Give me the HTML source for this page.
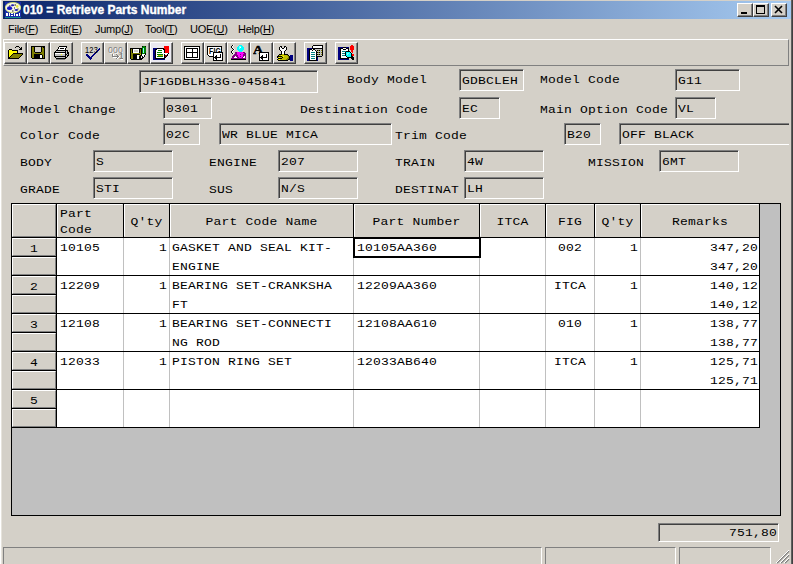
<!DOCTYPE html>
<html><head><meta charset="utf-8"><title>010 = Retrieve Parts Number</title>
<style>
html,body{margin:0;padding:0;}
body{width:793px;height:564px;overflow:hidden;background:#d4d0c8;position:relative;font-family:"Liberation Mono",monospace;font-size:13px;letter-spacing:0.2px;color:#000;}
.abs,.l,.f,.hc,.rh,.c,.tb,.sp,.menu,.cap{position:absolute;box-sizing:border-box;}
#title{left:3px;top:1px;width:788px;height:18px;background:linear-gradient(90deg,#0a246a 0%,#a6caf0 100%);}
#ttext{left:23px;top:3px;font-family:"Liberation Sans",sans-serif;font-weight:bold;font-size:12px;color:#fff;white-space:nowrap;line-height:15px;-webkit-text-stroke:0.35px #fff;letter-spacing:0;}
.cap{top:3px;width:16px;height:14px;background:#d4d0c8;border:1px solid;border-color:#fff #404040 #404040 #fff;box-shadow:inset -1px -1px 0 #808080;}
.menu{top:22px;font-family:"Liberation Sans",sans-serif;font-size:11px;letter-spacing:-0.25px;line-height:14px;white-space:nowrap;}
.tb{top:42px;width:23px;height:22px;background:#d4d0c8;border:1px solid;border-color:#fff #404040 #404040 #fff;box-shadow:inset -1px -1px 0 #808080;}
.l{white-space:nowrap;line-height:15px;height:15px;}
.f{background:#d4d0c8;border:1px solid;border-color:#808080 #fff #fff #808080;box-shadow:inset 1px 1px 0 #404040;white-space:nowrap;line-height:15px;padding:3px 0 0 2px;overflow:hidden;}
#grid{left:11px;top:203px;width:770px;height:313px;background:#c0c0c0;border:1px solid #000;}
.hc{top:204px;height:33px;background:#d4d0c8;border:1px solid;border-color:#fff #d4d0c8 #d4d0c8 #fff;white-space:nowrap;line-height:15px;text-align:center;}
.rh{left:12px;width:44px;height:18px;background:#d4d0c8;border:1px solid;border-color:#fff #808080 #808080 #fff;text-align:center;line-height:18px;padding-top:1px;}
.c{white-space:nowrap;line-height:19px;height:19px;}
.r{text-align:right;}
.t{display:inline-block;transform:scaleY(0.9);transform-origin:0 11px;}
.c .t{transform-origin:0 13px;}
.rh .t{transform-origin:0 12.5px;}
.sp{top:547px;height:19px;border:1px solid;border-color:#808080 #fff #fff #808080;}
</style></head><body>
<div id="title" class="abs"></div>
<svg class="abs" style="left:5px;top:2px" width="16" height="16" viewBox="0 0 16 16"><rect width="16" height="16" fill="#1a2caa"/><ellipse cx="8" cy="5.6" rx="7.8" ry="5.2" fill="#f6f6e4" stroke="#d8e860" stroke-width="0.8"/><ellipse cx="4.6" cy="6.2" rx="2.6" ry="1.9" fill="#1818c8"/><ellipse cx="7.6" cy="3.2" rx="1.6" ry="1" fill="#2020b0"/><ellipse cx="11.3" cy="8" rx="1.8" ry="1.1" fill="#2020b0"/><ellipse cx="12.2" cy="4.4" rx="1.3" ry="1.4" fill="#e8e840"/><path d="M9.5 2.5h1.5v1h-1.5zM9 5.5h1v1H9zM12.5 6.5h1v1h-1zM4 3.5h1.5v.8H4zM7 8.5h1.5v1H7z" fill="#101010"/><path d="M1 11h2v3H1zM4 11h1v3H4zM6 11h2v1H6zM6 13h2v1H6zM9 11h1v3H9zM11 12h2v2h-2zM14 11h1v3h-1z" fill="#fff"/><rect x="0" y="15" width="16" height="1" fill="#108888"/></svg>
<div id="ttext" class="abs">010 = Retrieve Parts Number</div>
<div class="cap" style="left:737px"><svg width="14" height="12" style="display:block" shape-rendering="crispEdges"><rect x="3" y="8" width="6" height="2" fill="#000"/></svg></div>
<div class="cap" style="left:753px"><svg width="14" height="12" style="display:block" shape-rendering="crispEdges"><path d="M2.5 1.5h8v8h-8z" fill="none" stroke="#000"/><path d="M2 2h9" stroke="#000" stroke-width="2"/></svg></div>
<div class="cap" style="left:771px"><svg width="14" height="12" style="display:block"><path d="M3 2l7 7M10 2l-7 7" stroke="#000" stroke-width="1.6"/></svg></div>
<div class="menu" style="left:8px">File(<u>F</u>)</div>
<div class="menu" style="left:50px">Edit(<u>E</u>)</div>
<div class="menu" style="left:95px">Jump(<u>J</u>)</div>
<div class="menu" style="left:145px">Tool(<u>T</u>)</div>
<div class="menu" style="left:190px">UOE(<u>U</u>)</div>
<div class="menu" style="left:238px">Help(<u>H</u>)</div>
<div class="abs" style="left:3px;top:39px;width:786px;height:27px;border:1px solid;border-color:#fff #808080 #808080 #fff"></div>
<div class="abs" style="left:0;top:0;width:1px;height:564px;background:#fff"></div>
<div class="abs" style="left:1px;top:0;width:1px;height:564px;background:#e6e3dc"></div>
<div class="abs" style="left:791px;top:0;width:1px;height:564px;background:#606060"></div>
<div class="abs" style="left:792px;top:0;width:1px;height:564px;background:#404040"></div>
<div class="tb" style="left:4px"></div>
<div class="tb" style="left:27px"></div>
<div class="tb" style="left:50px"></div>
<div class="tb" style="left:81px"></div>
<div class="tb" style="left:104px"></div>
<div class="tb" style="left:127px"></div>
<div class="tb" style="left:150px;background:#ebe9f0"></div>
<div class="tb" style="left:181px"></div>
<div class="tb" style="left:204px"></div>
<div class="tb" style="left:227px"></div>
<div class="tb" style="left:250px"></div>
<div class="tb" style="left:273px"></div>
<div class="tb" style="left:304px"></div>
<div class="tb" style="left:335px"></div>
<svg class="abs" style="left:8px;top:45px" width="16" height="14" shape-rendering="crispEdges"><path fill="#000" d="M8 1h3v1h-3zM7 2h1v1h-1zM11 2h1v1h-1zM13 2h1v1h-1zM12 3h2v1h-2zM1 4h3v1h-3zM11 4h3v1h-3zM0 5h1v1h-1zM4 5h6v1h-6zM0 6h1v1h-1zM9 6h1v1h-1zM0 7h1v1h-1zM9 7h1v1h-1zM0 8h1v1h-1zM5 8h10v1h-10zM0 9h1v1h-1zM4 9h1v1h-1zM14 9h1v1h-1zM0 10h1v1h-1zM3 10h1v1h-1zM13 10h1v1h-1zM0 11h1v1h-1zM2 11h1v1h-1zM12 11h1v1h-1zM0 12h2v1h-2zM11 12h1v1h-1zM0 13h11v1h-11z"/><path fill="#ffff00" d="M1 5h3v1h-3zM1 6h8v1h-8zM1 7h8v1h-8zM1 8h4v1h-4zM1 9h3v1h-3zM1 10h2v1h-2zM1 11h1v1h-1z"/><path fill="#808000" d="M5 9h9v1h-9zM4 10h9v1h-9zM3 11h9v1h-9zM2 12h9v1h-9z"/></svg>
<svg class="abs" style="left:31px;top:46px" width="15" height="13" shape-rendering="crispEdges"><path fill="#000" d="M0 0h14v1h-14zM0 1h1v1h-1zM3 1h1v1h-1zM10 1h1v1h-1zM12 1h2v1h-2zM0 2h1v1h-1zM3 2h1v1h-1zM10 2h1v1h-1zM13 2h1v1h-1zM0 3h1v1h-1zM3 3h1v1h-1zM10 3h1v1h-1zM13 3h1v1h-1zM0 4h1v1h-1zM3 4h1v1h-1zM10 4h1v1h-1zM13 4h1v1h-1zM0 5h1v1h-1zM3 5h1v1h-1zM10 5h1v1h-1zM13 5h1v1h-1zM0 6h1v1h-1zM4 6h6v1h-6zM13 6h1v1h-1zM0 7h1v1h-1zM13 7h1v1h-1zM0 8h1v1h-1zM3 8h8v1h-8zM13 8h1v1h-1zM0 9h1v1h-1zM3 9h6v1h-6zM11 9h1v1h-1zM13 9h1v1h-1zM0 10h1v1h-1zM3 10h6v1h-6zM11 10h1v1h-1zM13 10h1v1h-1zM0 11h1v1h-1zM3 11h6v1h-6zM11 11h1v1h-1zM13 11h1v1h-1zM1 12h13v1h-13z"/><path fill="#808000" d="M1 1h2v1h-2zM11 1h1v1h-1zM1 2h2v1h-2zM11 2h2v1h-2zM1 3h2v1h-2zM11 3h2v1h-2zM1 4h2v1h-2zM11 4h2v1h-2zM1 5h2v1h-2zM11 5h2v1h-2zM1 6h3v1h-3zM10 6h3v1h-3zM1 7h12v1h-12zM1 8h2v1h-2zM11 8h2v1h-2zM1 9h2v1h-2zM12 9h1v1h-1zM1 10h2v1h-2zM12 10h1v1h-1zM1 11h2v1h-2zM12 11h1v1h-1z"/><path fill="#d4d0c8" d="M4 1h6v1h-6zM4 2h6v1h-6zM4 3h6v1h-6zM4 4h6v1h-6zM4 5h6v1h-6z"/><path fill="#fff" d="M9 9h2v1h-2zM9 10h2v1h-2zM9 11h2v1h-2z"/></svg>
<svg class="abs" style="left:54px;top:46px" width="15" height="14" shape-rendering="crispEdges"><path fill="#000" d="M5 0h8v1h-8zM4 1h1v1h-1zM12 1h1v1h-1zM4 2h1v1h-1zM6 2h4v1h-4zM11 2h1v1h-1zM3 3h1v1h-1zM11 3h1v1h-1zM2 4h12v1h-12zM1 5h1v1h-1zM11 5h1v1h-1zM13 5h1v1h-1zM0 6h12v1h-12zM13 6h2v1h-2zM0 7h1v1h-1zM11 7h1v1h-1zM13 7h2v1h-2zM0 8h1v1h-1zM11 8h2v1h-2zM14 8h1v1h-1zM0 9h1v1h-1zM11 9h1v1h-1zM13 9h2v1h-2zM0 10h12v1h-12zM13 10h1v1h-1zM1 11h1v1h-1zM11 11h2v1h-2zM2 12h10v1h-10z"/><path fill="#fff" d="M5 1h7v1h-7zM5 2h1v1h-1zM10 2h1v1h-1zM4 3h7v1h-7zM1 7h10v1h-10z"/><path fill="#c0c0c0" d="M2 5h9v1h-9zM12 5h1v1h-1zM12 6h1v1h-1zM12 7h1v1h-1zM1 8h6v1h-6zM8 8h3v1h-3zM13 8h1v1h-1zM1 9h10v1h-10zM12 9h1v1h-1zM12 10h1v1h-1zM2 11h9v1h-9z"/><path fill="#ffff00" d="M7 8h1v1h-1z"/><path fill="#808080" d="M2 13h9v1h-9z"/></svg>
<svg class="abs" style="left:84px;top:45px" width="16" height="15" shape-rendering="crispEdges"><path fill="#000080" d="M15 3h1v1h-1zM14 4h2v1h-2zM13 5h2v1h-2zM12 6h2v1h-2zM11 7h2v1h-2zM10 8h2v1h-2zM2 9h2v1h-2zM9 9h2v1h-2zM2 10h3v1h-3zM8 10h2v1h-2zM3 11h3v1h-3zM7 11h2v1h-2zM4 12h4v1h-4zM5 13h3v1h-3zM6 14h1v1h-1z"/><text x="1" y="7.5" font-family="Liberation Sans,sans-serif" font-size="8.5" textLength="13" lengthAdjust="spacingAndGlyphs" fill="#000" shape-rendering="auto">123</text></svg>
<svg class="abs" style="left:107px;top:45px" width="16" height="15" shape-rendering="crispEdges"><path fill="#808080" d="M5 8h1v1h-1zM5 9h1v1h-1zM9 9h1v1h-1zM5 10h1v1h-1zM10 10h1v1h-1zM5 11h7v1h-7zM10 12h1v1h-1zM9 13h1v1h-1z"/><path fill="#fff" d="M6 9h1v1h-1zM6 10h1v1h-1zM12 11h1v1h-1zM6 12h4v1h-4zM11 12h1v1h-1zM10 13h1v1h-1z"/><text x="2" y="8.5" font-family="Liberation Sans,sans-serif" font-size="8.5" textLength="15" lengthAdjust="spacingAndGlyphs" fill="#fff" shape-rendering="auto">000</text><text x="1" y="7.5" font-family="Liberation Sans,sans-serif" font-size="8.5" textLength="15" lengthAdjust="spacingAndGlyphs" fill="#808080" shape-rendering="auto">000</text><text x="13" y="15" font-family="Liberation Sans,sans-serif" font-size="8.5" font-weight="bold" fill="#fff" shape-rendering="auto">1</text><text x="12" y="14" font-family="Liberation Sans,sans-serif" font-size="8.5" font-weight="bold" fill="#808080" shape-rendering="auto">1</text></svg>
<svg class="abs" style="left:130px;top:45px" width="16" height="15" shape-rendering="crispEdges"><path fill="#000" d="M12 1h1v1h-1zM15 1h1v1h-1zM0 3h12v1h-12zM0 4h1v1h-1zM2 4h1v1h-1zM9 4h1v1h-1zM11 4h1v1h-1zM0 5h1v1h-1zM2 5h1v1h-1zM9 5h1v1h-1zM11 5h1v1h-1zM0 6h1v1h-1zM2 6h1v1h-1zM9 6h1v1h-1zM11 6h1v1h-1zM0 7h1v1h-1zM2 7h1v1h-1zM9 7h1v1h-1zM11 7h1v1h-1zM0 8h1v1h-1zM11 8h1v1h-1zM15 8h1v1h-1zM0 9h1v1h-1zM3 9h7v1h-7zM11 9h1v1h-1zM15 9h1v1h-1zM0 10h1v1h-1zM3 10h4v1h-4zM10 10h2v1h-2zM14 10h1v1h-1zM0 11h1v1h-1zM3 11h4v1h-4zM9 11h2v1h-2zM12 11h1v1h-1zM14 11h1v1h-1zM0 12h1v1h-1zM3 12h4v1h-4zM9 12h2v1h-2zM12 12h2v1h-2zM0 13h1v1h-1zM3 13h4v1h-4zM9 13h4v1h-4zM1 14h11v1h-11z"/><path fill="#008000" d="M13 1h2v1h-2zM12 2h4v1h-4zM12 3h1v1h-1zM14 3h2v1h-2zM12 4h1v1h-1zM14 4h2v1h-2zM12 5h1v1h-1zM14 5h2v1h-2zM12 6h1v1h-1zM14 6h2v1h-2zM12 7h1v1h-1zM14 7h2v1h-2zM12 8h3v1h-3z"/><path fill="#80ffff" d="M13 3h1v1h-1zM13 4h1v1h-1zM13 5h1v1h-1zM13 6h1v1h-1zM13 7h1v1h-1z"/><path fill="#808000" d="M1 4h1v1h-1zM10 4h1v1h-1zM1 5h1v1h-1zM10 5h1v1h-1zM1 6h1v1h-1zM10 6h1v1h-1zM1 7h1v1h-1zM10 7h1v1h-1zM1 8h10v1h-10zM1 9h2v1h-2zM1 10h2v1h-2zM1 11h2v1h-2zM1 12h2v1h-2zM1 13h2v1h-2z"/><path fill="#fff" d="M3 4h6v1h-6zM3 5h1v1h-1zM8 5h1v1h-1zM3 6h1v1h-1zM8 6h1v1h-1zM3 7h6v1h-6zM12 9h3v1h-3zM7 10h2v1h-2zM12 10h2v1h-2zM7 11h2v1h-2zM13 11h1v1h-1zM7 12h2v1h-2zM11 12h1v1h-1zM7 13h2v1h-2z"/><path fill="#d4d0c8" d="M4 5h4v1h-4zM4 6h4v1h-4z"/><path fill="#c0c000" d="M10 9h1v1h-1zM9 10h1v1h-1z"/></svg>
<svg class="abs" style="left:153px;top:45px" width="16" height="15" shape-rendering="crispEdges"><path fill="#ff0000" d="M11 1h5v1h-5zM11 2h5v1h-5zM11 3h5v1h-5zM12 4h4v1h-4zM12 5h4v1h-4zM12 6h4v1h-4zM12 7h4v1h-4z"/><path fill="#000080" d="M0 3h4v1h-4zM0 4h2v1h-2zM0 5h2v1h-2zM0 6h2v1h-2zM0 7h2v1h-2zM0 8h2v1h-2zM0 9h2v1h-2zM0 10h2v1h-2zM0 11h2v1h-2zM0 12h2v1h-2zM0 13h2v1h-2zM0 14h12v1h-12z"/><path fill="#000" d="M4 3h7v1h-7zM2 4h2v1h-2zM10 4h2v1h-2zM2 5h1v1h-1zM11 5h1v1h-1zM2 6h1v1h-1zM11 6h1v1h-1zM2 7h1v1h-1zM11 7h1v1h-1zM2 8h1v1h-1zM15 8h1v1h-1zM2 9h1v1h-1zM11 9h1v1h-1zM14 9h1v1h-1zM2 10h1v1h-1zM11 10h1v1h-1zM14 10h1v1h-1zM2 11h1v1h-1zM11 11h1v1h-1zM13 11h1v1h-1zM2 12h1v1h-1zM11 12h2v1h-2zM2 13h10v1h-10z"/><path fill="#fff" d="M4 4h6v1h-6zM3 5h2v1h-2zM9 5h2v1h-2zM3 6h8v1h-8zM3 7h1v1h-1zM9 7h2v1h-2zM3 8h12v1h-12zM3 9h1v1h-1zM10 9h1v1h-1zM12 9h2v1h-2zM3 10h2v1h-2zM10 10h1v1h-1zM3 11h1v1h-1zM10 11h1v1h-1zM3 12h8v1h-8z"/><path fill="#008000" d="M5 5h4v1h-4zM4 7h5v1h-5zM4 9h6v1h-6zM4 11h6v1h-6z"/><path fill="#c0c000" d="M5 10h5v1h-5z"/><path fill="#800000" d="M12 10h2v1h-2zM12 11h1v1h-1z"/></svg>
<svg class="abs" style="left:184px;top:46px" width="16" height="14" shape-rendering="crispEdges"><path fill="#000" d="M0 0h16v1h-16zM0 1h1v1h-1zM15 1h1v1h-1zM0 2h1v1h-1zM2 2h12v1h-12zM15 2h1v1h-1zM0 3h1v1h-1zM2 3h1v1h-1zM8 3h1v1h-1zM13 3h1v1h-1zM15 3h1v1h-1zM0 4h1v1h-1zM2 4h1v1h-1zM8 4h1v1h-1zM13 4h1v1h-1zM15 4h1v1h-1zM0 5h1v1h-1zM2 5h1v1h-1zM8 5h1v1h-1zM13 5h1v1h-1zM15 5h1v1h-1zM0 6h1v1h-1zM2 6h12v1h-12zM15 6h1v1h-1zM0 7h1v1h-1zM2 7h1v1h-1zM8 7h1v1h-1zM13 7h1v1h-1zM15 7h1v1h-1zM0 8h1v1h-1zM2 8h1v1h-1zM8 8h1v1h-1zM13 8h1v1h-1zM15 8h1v1h-1zM0 9h1v1h-1zM2 9h1v1h-1zM8 9h1v1h-1zM13 9h1v1h-1zM15 9h1v1h-1zM0 10h1v1h-1zM2 10h1v1h-1zM8 10h1v1h-1zM13 10h1v1h-1zM15 10h1v1h-1zM0 11h1v1h-1zM2 11h12v1h-12zM15 11h1v1h-1zM0 12h1v1h-1zM15 12h1v1h-1zM0 13h16v1h-16z"/><path fill="#fff" d="M1 1h14v1h-14zM1 2h1v1h-1zM14 2h1v1h-1zM1 3h1v1h-1zM3 3h5v1h-5zM9 3h4v1h-4zM14 3h1v1h-1zM1 4h1v1h-1zM3 4h5v1h-5zM9 4h4v1h-4zM14 4h1v1h-1zM1 5h1v1h-1zM3 5h5v1h-5zM9 5h4v1h-4zM14 5h1v1h-1zM1 6h1v1h-1zM14 6h1v1h-1zM1 7h1v1h-1zM3 7h5v1h-5zM9 7h4v1h-4zM14 7h1v1h-1zM1 8h1v1h-1zM3 8h5v1h-5zM9 8h4v1h-4zM14 8h1v1h-1zM1 9h1v1h-1zM3 9h5v1h-5zM9 9h4v1h-4zM14 9h1v1h-1zM1 10h1v1h-1zM3 10h5v1h-5zM9 10h4v1h-4zM14 10h1v1h-1zM1 11h1v1h-1zM14 11h1v1h-1zM1 12h14v1h-14z"/></svg>
<svg class="abs" style="left:207px;top:46px" width="16" height="11" shape-rendering="crispEdges"><path fill="#000" d="M0 0h15v1h-15zM0 1h1v1h-1zM14 1h1v1h-1zM0 2h1v1h-1zM14 2h1v1h-1zM0 3h1v1h-1zM14 3h1v1h-1zM0 4h1v1h-1zM14 4h1v1h-1zM0 5h1v1h-1zM14 5h1v1h-1zM0 6h1v1h-1zM14 6h1v1h-1zM0 7h1v1h-1zM14 7h1v1h-1zM0 8h1v1h-1zM14 8h1v1h-1zM1 9h1v1h-1zM14 9h1v1h-1zM2 10h13v1h-13z"/><path fill="#fff" d="M1 1h13v1h-13zM1 2h13v1h-13zM1 3h13v1h-13zM1 4h13v1h-13zM1 5h13v1h-13zM1 6h13v1h-13zM1 7h13v1h-13zM1 8h13v1h-13zM2 9h12v1h-12z"/><text x="2" y="8" font-family="Liberation Sans,sans-serif" font-size="8.5" font-weight="bold" textLength="12" lengthAdjust="spacingAndGlyphs" fill="#000" shape-rendering="auto">FIG</text></svg>
<svg class="abs" style="left:213px;top:52px" width="10" height="9" shape-rendering="crispEdges"><path fill="#000" d="M0 0h10v1h-10zM0 1h1v1h-1zM9 1h1v1h-1zM0 2h1v1h-1zM7 2h1v1h-1zM9 2h1v1h-1zM0 3h1v1h-1zM3 3h1v1h-1zM7 3h1v1h-1zM9 3h1v1h-1zM0 4h1v1h-1zM2 4h2v1h-2zM7 4h1v1h-1zM9 4h1v1h-1zM0 5h8v1h-8zM9 5h1v1h-1zM0 6h1v1h-1zM2 6h2v1h-2zM9 6h1v1h-1zM0 7h1v1h-1zM3 7h1v1h-1zM9 7h1v1h-1zM0 8h10v1h-10z"/><path fill="#fff" d="M1 1h8v1h-8zM1 2h6v1h-6zM8 2h1v1h-1zM1 3h2v1h-2zM4 3h3v1h-3zM8 3h1v1h-1zM1 4h1v1h-1zM4 4h3v1h-3zM8 4h1v1h-1zM8 5h1v1h-1zM1 6h1v1h-1zM4 6h5v1h-5zM1 7h2v1h-2zM4 7h5v1h-5z"/></svg>
<svg class="abs" style="left:230px;top:45px" width="16" height="15" shape-rendering="crispEdges"><path fill="#000" d="M2 0h1v1h-1zM1 1h1v1h-1zM1 2h1v1h-1zM2 3h1v1h-1zM3 4h1v1h-1zM2 5h1v1h-1zM1 6h1v1h-1zM1 7h1v1h-1zM2 8h1v1h-1zM1 14h15v1h-15z"/><path fill="#fff" d="M3 0h1v1h-1zM2 1h1v1h-1zM2 2h1v1h-1zM10 2h1v1h-1zM3 3h1v1h-1zM4 4h1v1h-1zM3 5h1v1h-1zM2 6h1v1h-1zM2 7h1v1h-1zM3 8h1v1h-1zM5 11h1v1h-1zM14 11h1v1h-1zM4 12h3v1h-3zM13 12h2v1h-2z"/><path fill="#00ffff" d="M9 0h3v1h-3zM8 1h1v1h-1zM11 1h2v1h-2zM7 2h2v1h-2zM11 2h3v1h-3zM7 3h2v1h-2zM10 3h4v1h-4zM7 4h7v1h-7zM8 5h5v1h-5zM9 6h3v1h-3z"/><path fill="#80ffff" d="M9 1h2v1h-2zM9 2h1v1h-1zM9 3h1v1h-1z"/><path fill="#800080" d="M5 7h2v1h-2zM13 7h2v1h-2zM5 8h2v1h-2zM14 8h2v1h-2zM4 9h3v1h-3zM10 9h1v1h-1zM13 9h3v1h-3zM3 10h5v1h-5zM13 10h3v1h-3zM2 11h3v1h-3zM6 11h2v1h-2zM10 11h1v1h-1zM13 11h1v1h-1zM15 11h1v1h-1zM2 12h2v1h-2zM7 12h2v1h-2zM12 12h1v1h-1zM15 12h1v1h-1zM1 13h15v1h-15z"/><path fill="#ff00ff" d="M7 7h6v1h-6zM7 8h7v1h-7zM7 9h3v1h-3zM11 9h2v1h-2zM8 10h5v1h-5zM8 11h2v1h-2zM11 11h2v1h-2zM9 12h3v1h-3z"/></svg>
<svg class="abs" style="left:253px;top:45px" width="16" height="11" shape-rendering="crispEdges"><text x="0" y="9" font-family="Liberation Serif,serif" font-size="12.5" font-weight="bold" textLength="10.5" lengthAdjust="spacingAndGlyphs" stroke="#000" stroke-width="0.5" fill="#000" shape-rendering="auto">A</text></svg>
<svg class="abs" style="left:259px;top:52px" width="10" height="9" shape-rendering="crispEdges"><path fill="#000" d="M0 0h10v1h-10zM0 1h1v1h-1zM9 1h1v1h-1zM0 2h1v1h-1zM7 2h1v1h-1zM9 2h1v1h-1zM0 3h1v1h-1zM3 3h1v1h-1zM7 3h1v1h-1zM9 3h1v1h-1zM0 4h1v1h-1zM2 4h2v1h-2zM7 4h1v1h-1zM9 4h1v1h-1zM0 5h8v1h-8zM9 5h1v1h-1zM0 6h1v1h-1zM2 6h2v1h-2zM9 6h1v1h-1zM0 7h1v1h-1zM3 7h1v1h-1zM9 7h1v1h-1zM0 8h10v1h-10z"/><path fill="#fff" d="M1 1h8v1h-8zM1 2h6v1h-6zM8 2h1v1h-1zM1 3h2v1h-2zM4 3h3v1h-3zM8 3h1v1h-1zM1 4h1v1h-1zM4 4h3v1h-3zM8 4h1v1h-1zM8 5h1v1h-1zM1 6h1v1h-1zM4 6h5v1h-5zM1 7h2v1h-2zM4 7h5v1h-5z"/></svg>
<svg class="abs" style="left:277px;top:45px" width="16" height="16" shape-rendering="crispEdges"><path fill="#000" d="M3 1h2v1h-2zM7 1h2v1h-2zM2 2h1v1h-1zM4 2h1v1h-1zM7 2h1v1h-1zM9 2h1v1h-1zM2 3h1v1h-1zM5 3h2v1h-2zM9 3h1v1h-1zM2 4h1v1h-1zM9 4h1v1h-1zM3 5h1v1h-1zM8 5h1v1h-1zM4 6h1v1h-1zM7 6h1v1h-1zM4 7h1v1h-1zM7 7h1v1h-1zM4 8h1v1h-1zM7 8h1v1h-1zM2 9h3v1h-3zM7 9h4v1h-4zM1 10h1v1h-1zM11 10h1v1h-1zM0 11h5v1h-5zM12 11h1v1h-1zM0 12h1v1h-1zM5 12h1v1h-1zM12 12h1v1h-1zM1 13h4v1h-4zM12 13h1v1h-1zM0 14h1v1h-1zM11 14h2v1h-2zM1 15h10v1h-10z"/><path fill="#fff" d="M3 2h1v1h-1zM8 2h1v1h-1zM3 3h2v1h-2zM7 3h2v1h-2zM3 4h6v1h-6zM4 5h4v1h-4zM5 6h2v1h-2zM5 7h2v1h-2zM5 8h2v1h-2z"/><path fill="#c0c000" d="M5 9h2v1h-2zM2 10h2v1h-2zM5 10h5v1h-5zM5 11h1v1h-1zM7 11h4v1h-4zM1 12h1v1h-1zM3 12h2v1h-2zM6 12h5v1h-5zM5 13h5v1h-5zM1 14h1v1h-1zM3 14h6v1h-6z"/><path fill="#ffff00" d="M4 10h1v1h-1zM6 11h1v1h-1zM2 12h1v1h-1zM2 14h1v1h-1z"/><path fill="#808000" d="M10 10h1v1h-1zM11 11h1v1h-1zM11 12h1v1h-1zM10 13h2v1h-2zM9 14h2v1h-2z"/><path fill="#000080" d="M13 10h3v1h-3zM13 11h3v1h-3zM13 12h3v1h-3zM13 13h3v1h-3zM13 14h3v1h-3zM13 15h3v1h-3z"/></svg>
<svg class="abs" style="left:307px;top:45px" width="16" height="16" shape-rendering="crispEdges"><path fill="#000" d="M6 0h10v1h-10zM5 1h1v1h-1zM15 1h1v1h-1zM5 2h1v1h-1zM15 2h1v1h-1zM5 3h11v1h-11zM2 4h3v1h-3zM6 4h2v1h-2zM15 4h1v1h-1zM2 5h1v1h-1zM5 5h1v1h-1zM8 5h1v1h-1zM10 5h1v1h-1zM12 5h1v1h-1zM15 5h1v1h-1zM2 6h1v1h-1zM9 6h1v1h-1zM15 6h1v1h-1zM2 7h1v1h-1zM9 7h2v1h-2zM12 7h1v1h-1zM15 7h1v1h-1zM2 8h1v1h-1zM9 8h1v1h-1zM15 8h1v1h-1zM2 9h1v1h-1zM9 9h2v1h-2zM12 9h1v1h-1zM15 9h1v1h-1zM2 10h1v1h-1zM9 10h1v1h-1zM15 10h1v1h-1zM2 11h1v1h-1zM9 11h6v1h-6zM2 12h1v1h-1zM9 12h1v1h-1zM2 13h1v1h-1zM9 13h1v1h-1zM2 14h1v1h-1zM9 14h1v1h-1zM2 15h8v1h-8z"/><path fill="#fff" d="M6 1h9v1h-9zM6 2h9v1h-9zM5 4h1v1h-1zM3 5h2v1h-2zM6 5h2v1h-2zM3 6h6v1h-6zM3 7h1v1h-1zM8 7h1v1h-1zM3 8h6v1h-6zM3 9h1v1h-1zM8 9h1v1h-1zM3 10h6v1h-6zM3 11h1v1h-1zM8 11h1v1h-1zM3 12h6v1h-6zM3 13h1v1h-1zM8 13h1v1h-1zM3 14h6v1h-6z"/><path fill="#000080" d="M0 3h5v1h-5zM0 4h2v1h-2zM0 5h2v1h-2zM0 6h2v1h-2zM0 7h2v1h-2zM0 8h2v1h-2zM0 9h2v1h-2zM0 10h2v1h-2zM0 11h2v1h-2zM0 12h2v1h-2zM10 12h1v1h-1zM0 13h2v1h-2zM10 13h1v1h-1zM0 14h2v1h-2zM10 14h1v1h-1zM0 15h2v1h-2zM10 15h1v1h-1z"/><path fill="#c0c0c0" d="M8 4h7v1h-7zM9 5h1v1h-1zM13 5h1v1h-1zM10 6h5v1h-5zM13 7h1v1h-1zM10 8h5v1h-5zM13 9h1v1h-1zM10 10h5v1h-5z"/><path fill="#808000" d="M11 5h1v1h-1zM14 5h1v1h-1zM11 7h1v1h-1zM14 7h1v1h-1zM11 9h1v1h-1zM14 9h1v1h-1z"/><path fill="#008080" d="M4 7h4v1h-4zM4 9h4v1h-4zM4 11h4v1h-4zM4 13h4v1h-4z"/></svg>
<svg class="abs" style="left:338px;top:45px" width="16" height="15" shape-rendering="crispEdges"><path fill="#ff0000" d="M13 0h2v1h-2zM12 1h4v1h-4zM12 2h4v1h-4zM12 3h4v1h-4zM12 4h4v1h-4zM13 5h2v1h-2zM13 6h2v1h-2zM14 7h1v1h-1zM14 9h2v1h-2zM14 10h2v1h-2z"/><path fill="#000080" d="M0 2h5v1h-5zM8 2h3v1h-3zM0 3h2v1h-2zM0 4h2v1h-2zM0 5h2v1h-2zM0 6h2v1h-2zM0 7h2v1h-2zM0 8h2v1h-2zM0 9h2v1h-2zM0 10h2v1h-2zM0 11h2v1h-2zM0 12h2v1h-2zM0 13h2v1h-2zM0 14h11v1h-11z"/><path fill="#000" d="M5 2h3v1h-3zM2 3h3v1h-3zM8 3h3v1h-3zM2 4h1v1h-1zM5 4h3v1h-3zM10 4h1v1h-1zM2 5h1v1h-1zM10 5h1v1h-1zM2 6h1v1h-1zM8 6h4v1h-4zM2 7h1v1h-1zM7 7h1v1h-1zM12 7h1v1h-1zM2 8h1v1h-1zM7 8h1v1h-1zM13 8h1v1h-1zM2 9h1v1h-1zM7 9h1v1h-1zM13 9h1v1h-1zM2 10h1v1h-1zM7 10h1v1h-1zM13 10h1v1h-1zM2 11h1v1h-1zM8 11h1v1h-1zM13 11h2v1h-2zM2 12h1v1h-1zM9 12h7v1h-7zM2 13h9v1h-9zM13 13h3v1h-3zM14 14h2v1h-2z"/><path fill="#fff" d="M5 3h3v1h-3zM3 4h2v1h-2zM8 4h2v1h-2zM3 5h7v1h-7zM3 6h1v1h-1zM3 7h4v1h-4zM3 8h1v1h-1zM3 9h4v1h-4zM3 10h1v1h-1zM3 11h5v1h-5zM3 12h6v1h-6z"/><path fill="#008080" d="M4 6h4v1h-4zM4 8h3v1h-3zM4 10h3v1h-3z"/><path fill="#00ffff" d="M8 7h4v1h-4zM8 8h1v1h-1zM11 8h2v1h-2zM8 9h1v1h-1zM10 9h3v1h-3zM8 10h5v1h-5zM9 11h4v1h-4z"/><path fill="#80ffff" d="M9 8h2v1h-2zM9 9h1v1h-1z"/></svg>
<div class="l" style="left:20px;top:72px"><span class="t">Vin-Code</span></div>
<div class="f" style="left:139px;top:70px;width:179px;height:23px"><span class="t">JF1GDBLH33G-045841</span></div>
<div class="l" style="left:347px;top:72px"><span class="t">Body Model</span></div>
<div class="f" style="left:459px;top:69px;width:65px;height:22px"><span class="t">GDBCLEH</span></div>
<div class="l" style="left:540px;top:72px"><span class="t">Model Code</span></div>
<div class="f" style="left:675px;top:69px;width:65px;height:22px"><span class="t">G11</span></div>
<div class="l" style="left:20px;top:102px"><span class="t">Model Change</span></div>
<div class="f" style="left:163px;top:97px;width:49px;height:22px"><span class="t">0301</span></div>
<div class="l" style="left:300px;top:102px"><span class="t">Destination Code</span></div>
<div class="f" style="left:459px;top:97px;width:41px;height:22px"><span class="t">EC</span></div>
<div class="l" style="left:540px;top:102px"><span class="t">Main Option Code</span></div>
<div class="f" style="left:675px;top:97px;width:41px;height:22px"><span class="t">VL</span></div>
<div class="l" style="left:20px;top:128px"><span class="t">Color Code</span></div>
<div class="f" style="left:163px;top:123px;width:37px;height:22px"><span class="t">02C</span></div>
<div class="f" style="left:219px;top:123px;width:173px;height:22px"><span class="t">WR BLUE MICA</span></div>
<div class="l" style="left:395px;top:128px"><span class="t">Trim Code</span></div>
<div class="f" style="left:564px;top:123px;width:37px;height:22px"><span class="t">B20</span></div>
<div class="f" style="left:619px;top:123px;width:170px;height:22px;border-right:none"><span class="t">OFF BLACK</span></div>
<div class="l" style="left:20px;top:155px"><span class="t">BODY</span></div>
<div class="f" style="left:93px;top:150px;width:80px;height:22px"><span class="t">S</span></div>
<div class="l" style="left:209px;top:155px"><span class="t">ENGINE</span></div>
<div class="f" style="left:278px;top:150px;width:80px;height:22px"><span class="t">207</span></div>
<div class="l" style="left:395px;top:155px"><span class="t">TRAIN</span></div>
<div class="f" style="left:464px;top:150px;width:80px;height:22px"><span class="t">4W</span></div>
<div class="l" style="left:588px;top:155px"><span class="t">MISSION</span></div>
<div class="f" style="left:659px;top:150px;width:80px;height:22px"><span class="t">6MT</span></div>
<div class="l" style="left:20px;top:182px"><span class="t">GRADE</span></div>
<div class="f" style="left:93px;top:177px;width:80px;height:22px"><span class="t">STI</span></div>
<div class="l" style="left:209px;top:182px"><span class="t">SUS</span></div>
<div class="f" style="left:278px;top:177px;width:80px;height:22px"><span class="t">N/S</span></div>
<div class="l" style="left:395px;top:182px"><span class="t">DESTINAT</span></div>
<div class="f" style="left:464px;top:177px;width:80px;height:22px"><span class="t">LH</span></div>
<div id="grid" class="abs"></div>
<div class="abs" style="left:12px;top:204px;width:748px;height:224px;background:#fff"></div>
<div class="abs" style="left:123px;top:238px;width:1px;height:190px;background:#c0c0c0"></div>
<div class="abs" style="left:169px;top:238px;width:1px;height:190px;background:#c0c0c0"></div>
<div class="abs" style="left:353px;top:238px;width:1px;height:190px;background:#c0c0c0"></div>
<div class="abs" style="left:479px;top:238px;width:1px;height:190px;background:#c0c0c0"></div>
<div class="abs" style="left:545px;top:238px;width:1px;height:190px;background:#c0c0c0"></div>
<div class="abs" style="left:594px;top:238px;width:1px;height:190px;background:#c0c0c0"></div>
<div class="abs" style="left:640px;top:238px;width:1px;height:190px;background:#c0c0c0"></div>
<div class="abs" style="left:12px;top:275px;width:748px;height:1px;background:#000"></div>
<div class="abs" style="left:12px;top:256px;width:44px;height:1px;background:#000"></div>
<div class="abs" style="left:12px;top:313px;width:748px;height:1px;background:#000"></div>
<div class="abs" style="left:12px;top:294px;width:44px;height:1px;background:#000"></div>
<div class="abs" style="left:12px;top:351px;width:748px;height:1px;background:#000"></div>
<div class="abs" style="left:12px;top:332px;width:44px;height:1px;background:#000"></div>
<div class="abs" style="left:12px;top:389px;width:748px;height:1px;background:#000"></div>
<div class="abs" style="left:12px;top:370px;width:44px;height:1px;background:#000"></div>
<div class="abs" style="left:12px;top:427px;width:748px;height:1px;background:#000"></div>
<div class="abs" style="left:12px;top:408px;width:44px;height:1px;background:#000"></div>
<div class="abs" style="left:12px;top:237px;width:748px;height:1px;background:#000"></div>
<div class="abs" style="left:56px;top:204px;width:1px;height:224px;background:#000"></div>
<div class="abs" style="left:123px;top:204px;width:1px;height:33px;background:#000"></div>
<div class="abs" style="left:169px;top:204px;width:1px;height:33px;background:#000"></div>
<div class="abs" style="left:353px;top:204px;width:1px;height:33px;background:#000"></div>
<div class="abs" style="left:479px;top:204px;width:1px;height:33px;background:#000"></div>
<div class="abs" style="left:545px;top:204px;width:1px;height:33px;background:#000"></div>
<div class="abs" style="left:594px;top:204px;width:1px;height:33px;background:#000"></div>
<div class="abs" style="left:640px;top:204px;width:1px;height:33px;background:#000"></div>
<div class="abs" style="left:759px;top:204px;width:1px;height:224px;background:#000"></div>
<div class="hc" style="left:12px;width:44px;border-color:#fff #808080 #808080 #fff"></div>
<div class="hc" style="left:57px;width:66px;text-align:left;padding:1px 0 0 2px;line-height:16px"><span class="t">Part</span><br><span class="t">Code</span></div>
<div class="hc" style="left:124px;width:45px;padding-top:9px"><span class="t">Q'ty</span></div>
<div class="hc" style="left:170px;width:183px;padding-top:9px"><span class="t">Part Code Name</span></div>
<div class="hc" style="left:354px;width:125px;padding-top:9px"><span class="t">Part Number</span></div>
<div class="hc" style="left:480px;width:65px;padding-top:9px"><span class="t">ITCA</span></div>
<div class="hc" style="left:546px;width:48px;padding-top:9px"><span class="t">FIG</span></div>
<div class="hc" style="left:595px;width:45px;padding-top:9px"><span class="t">Q'ty</span></div>
<div class="hc" style="left:641px;width:118px;padding-top:9px"><span class="t">Remarks</span></div>
<div class="rh" style="top:238px"><span class="t">1</span></div>
<div class="rh" style="top:257px"></div>
<div class="c" style="left:60px;top:238px"><span class="t">10105</span></div>
<div class="c r" style="left:125px;width:42px;top:238px"><span class="t">1</span></div>
<div class="c" style="left:172px;top:238px"><span class="t">GASKET AND SEAL KIT-</span></div>
<div class="c" style="left:172px;top:257px"><span class="t">ENGINE</span></div>
<div class="c" style="left:357px;top:238px"><span class="t">10105AA360</span></div>
<div class="c" style="left:546px;width:48px;text-align:center;top:238px"><span class="t">002</span></div>
<div class="c r" style="left:595px;width:43px;top:238px"><span class="t">1</span></div>
<div class="c r" style="left:641px;width:117px;top:238px"><span class="t">347,20</span></div>
<div class="c r" style="left:641px;width:117px;top:257px"><span class="t">347,20</span></div>
<div class="rh" style="top:276px"><span class="t">2</span></div>
<div class="rh" style="top:295px"></div>
<div class="c" style="left:60px;top:276px"><span class="t">12209</span></div>
<div class="c r" style="left:125px;width:42px;top:276px"><span class="t">1</span></div>
<div class="c" style="left:172px;top:276px"><span class="t">BEARING SET-CRANKSHA</span></div>
<div class="c" style="left:172px;top:295px"><span class="t">FT</span></div>
<div class="c" style="left:357px;top:276px"><span class="t">12209AA360</span></div>
<div class="c" style="left:546px;width:48px;text-align:center;top:276px"><span class="t">ITCA</span></div>
<div class="c r" style="left:595px;width:43px;top:276px"><span class="t">1</span></div>
<div class="c r" style="left:641px;width:117px;top:276px"><span class="t">140,12</span></div>
<div class="c r" style="left:641px;width:117px;top:295px"><span class="t">140,12</span></div>
<div class="rh" style="top:314px"><span class="t">3</span></div>
<div class="rh" style="top:333px"></div>
<div class="c" style="left:60px;top:314px"><span class="t">12108</span></div>
<div class="c r" style="left:125px;width:42px;top:314px"><span class="t">1</span></div>
<div class="c" style="left:172px;top:314px"><span class="t">BEARING SET-CONNECTI</span></div>
<div class="c" style="left:172px;top:333px"><span class="t">NG ROD</span></div>
<div class="c" style="left:357px;top:314px"><span class="t">12108AA610</span></div>
<div class="c" style="left:546px;width:48px;text-align:center;top:314px"><span class="t">010</span></div>
<div class="c r" style="left:595px;width:43px;top:314px"><span class="t">1</span></div>
<div class="c r" style="left:641px;width:117px;top:314px"><span class="t">138,77</span></div>
<div class="c r" style="left:641px;width:117px;top:333px"><span class="t">138,77</span></div>
<div class="rh" style="top:352px"><span class="t">4</span></div>
<div class="rh" style="top:371px"></div>
<div class="c" style="left:60px;top:352px"><span class="t">12033</span></div>
<div class="c r" style="left:125px;width:42px;top:352px"><span class="t">1</span></div>
<div class="c" style="left:172px;top:352px"><span class="t">PISTON RING SET</span></div>
<div class="c" style="left:357px;top:352px"><span class="t">12033AB640</span></div>
<div class="c" style="left:546px;width:48px;text-align:center;top:352px"><span class="t">ITCA</span></div>
<div class="c r" style="left:595px;width:43px;top:352px"><span class="t">1</span></div>
<div class="c r" style="left:641px;width:117px;top:352px"><span class="t">125,71</span></div>
<div class="c r" style="left:641px;width:117px;top:371px"><span class="t">125,71</span></div>
<div class="rh" style="top:390px"><span class="t">5</span></div>
<div class="rh" style="top:409px"></div>
<div class="abs" style="left:353px;top:237px;width:128px;height:21px;border:2px solid #000"></div>
<div class="f r" style="left:658px;top:523px;width:121px;height:19px;padding:1px 1px 0 0;line-height:15px"><span class="t">751,80</span></div>
<div class="sp" style="left:3px;width:539px"></div>
<div class="sp" style="left:545px;width:131px"></div>
<div class="sp" style="left:679px;width:92px"></div>
<svg class="abs" style="left:776px;top:550px" width="14" height="14"><path d="M13 1L1 13M13 5L5 13M13 9L9 13" stroke="#808080" stroke-width="1.5"/><path d="M13 0L0 13M13 4L4 13M13 8L8 13" stroke="#fff" stroke-width="1"/></svg>
</body></html>
